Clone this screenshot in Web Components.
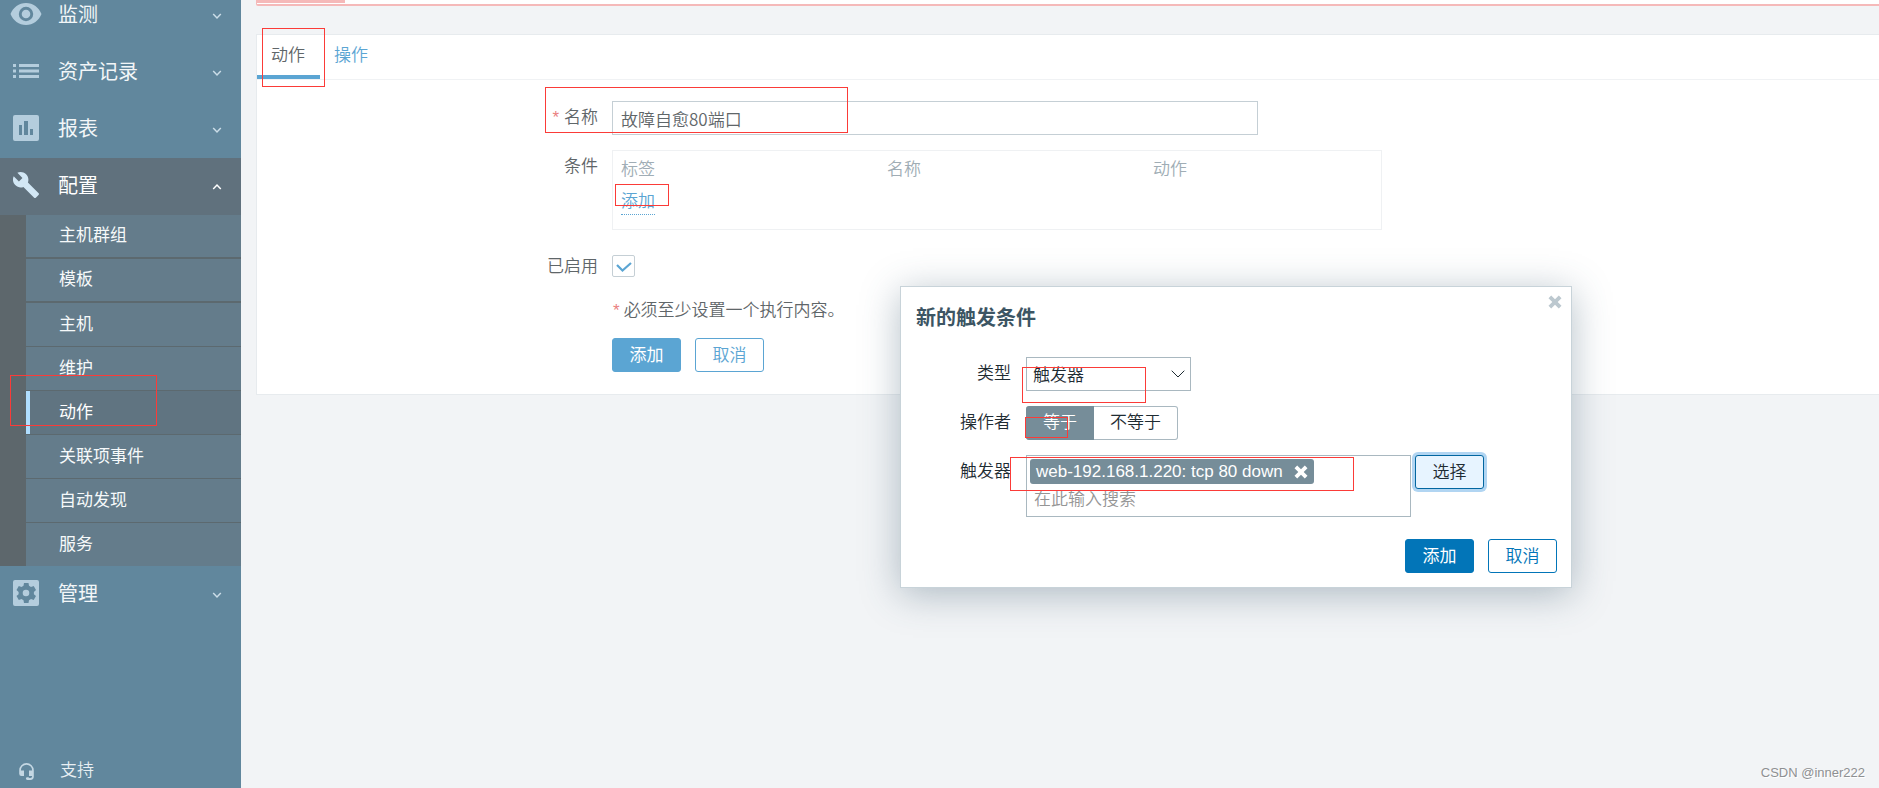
<!DOCTYPE html>
<html lang="zh-CN">
<head>
<meta charset="utf-8">
<title>动作配置</title>
<style>
html, body { margin: 0; height: 100%; }
body { font: 350 17px/24px "Liberation Sans", "Noto Sans CJK SC", sans-serif; color: #1f2c33; background: #f2f4f6; overflow: hidden; }
</style>
</head>
<body>
<zbx-app></zbx-app>
<script>
const define = (name, html, setup) => {
  const template = document.createElement('template');
  template.innerHTML = html;
  customElements.define(name, class extends HTMLElement {
    constructor() {
      super();
      this.attachShadow({ mode: 'open' }).append(template.content.cloneNode(true));
    }
    connectedCallback() { if (setup) setup(this, this.shadowRoot); }
  });
};

// Each icon is its viewBox and its artwork.
const icons = {
  eye: ['0 0 32 24', '<path fill-rule="evenodd" d="M16 1C9 1 3 5.500 .5 12 3 18.500 9 23 16 23s13-4.500 15.500-11C29 5.500 23 1 16 1zm0 18.200a7.200 7.200 0 1 1 0-14.400 7.200 7.200 0 0 1 0 14.400zm0-2.900a4.300 4.300 0 1 0 0-8.600 4.300 4.300 0 0 0 0 8.600z"/>'],
  list: ['0 0 26 16', '<path d="M0 1h3v3H0zM6 1h20v3H6zM0 6.500h3v3H0zM6 6.500h20v3H6zM0 12h3v3H0zM6 12h20v3H6z"/>'],
  chart: ['0 0 26 26', '<path fill-rule="evenodd" d="M2 0h22a2 2 0 0 1 2 2v22a2 2 0 0 1-2 2H2a2 2 0 0 1-2-2V2a2 2 0 0 1 2-2zm4 10v10h3V10zm5-4v14h4V6zm6 8v6h3v-6z"/>'],
  wrench: ['1 1 22 22', '<path d="M22.700 19l-9.100-9.100c.9-2.300.4-5-1.500-6.900-2-2-5-2.400-7.400-1.300L9 6 6 9 1.600 4.700C.4 7.100.9 10.100 2.900 12.100c1.900 1.900 4.600 2.400 6.900 1.500l9.100 9.100c.4.4 1 .4 1.400 0l2.300-2.300c.5-.4.5-1.100.1-1.400z"/>'],
  gear: ['0 0 26 26', '<path fill-rule="evenodd" d="M2 0h22a2 2 0 0 1 2 2v22a2 2 0 0 1-2 2H2a2 2 0 0 1-2-2V2a2 2 0 0 1 2-2zm9 3l-.5 2.700-2 1.200L5.800 6l-2.300 4 2.100 1.900v2.300L3.500 16l2.300 4 2.700-.9 2 1.200L11 23h4.500l.5-2.700 2-1.200 2.700.9 2.300-4-2.100-1.800v-2.300L23 10l-2.300-4-2.700.9-2-1.200-.5-2.700zm2 6.700a3.300 3.300 0 1 1 0 6.600 3.300 3.300 0 0 1 0-6.600z"/>'],
  headset: ['0 0 15 17', '<path d="M7.500 0A7.300 7.300 0 0 0 .2 7.300v3.400A2.300 2.300 0 0 0 2.500 13H5V7.600H1.900v-.3a5.600 5.600 0 0 1 11.200 0v.3H10V13h3.100v.3c0 1-.8 1.700-1.700 1.700h-1a1.500 1.500 0 0 0-1.300-.8H8.300a1.400 1.400 0 0 0 0 2.800h3.100a3.400 3.400 0 0 0 3.400-3.400V7.300A7.300 7.300 0 0 0 7.500 0z"/>'],
  cross: ['0 0 14 14', '<path d="M3.200.5L7 4.300 10.800.5 13.500 3.200 9.700 7l3.800 3.800-2.700 2.700L7 9.700l-3.800 3.800L.5 10.800 4.300 7 .5 3.200z"/>'],
  down: ['0 0 10 8', '<path d="M1.200 2L5 6l3.800-4" fill="none" stroke="currentColor" stroke-width="1.500"/>'],
  up: ['0 0 10 8', '<path d="M1.200 6L5 2l3.800 4" fill="none" stroke="currentColor" stroke-width="1.500"/>'],
  chevron: ['0 0 14 8', '<path d="M.7.7L7 7 13.300.7" fill="none" stroke="currentColor" stroke-width="1"/>']
};

define('zbx-icon', `<style>
  :host { display: block; }
  svg { display: block; width: 100%; height: 100%; fill: currentColor; }
</style><svg aria-hidden="true"></svg>`, (el, root) => {
  const icon = icons[el.getAttribute('name')];
  if (!icon) return;
  const svg = root.querySelector('svg');
  svg.setAttribute('viewBox', icon[0]);
  svg.innerHTML = icon[1];
});

define('zbx-nav-item', `<style>
  :host { display: block; color: #f2f6f8; --icon: #b4cddd; }
  a { display: flex; align-items: center; height: 57px; box-sizing: border-box; padding: 0 19px 3px 10px; color: inherit; text-decoration: none; font-size: 20px; line-height: 28px; font-weight: 400; }
  .icon { display: grid; place-items: center; width: 32px; margin-right: 16px; color: var(--icon); }
  .icon zbx-icon { width: 26px; height: 26px; }
  :host([icon=eye]) .icon zbx-icon { width: 32px; height: 24px; }
  :host([icon=list]) .icon zbx-icon { height: 16px; }
  .label { flex: 1; padding-top: 2px; }
  .arrow { width: 10px; height: 8px; margin-top: 4px; color: #cbdde8; }
  :host([open]) { --icon: #d2e7f5; color: #fff; }
  :host([open]) a { background: #60717d; }
  :host([open]) .arrow { color: #fff; }
</style><a href="#"><span class="icon"></span><span class="label"><slot></slot></span></a>
<slot name="menu"></slot>`, (el, root) => {
  const icon = document.createElement('zbx-icon');
  icon.setAttribute('name', el.getAttribute('icon'));
  const arrow = document.createElement('zbx-icon');
  arrow.setAttribute('name', el.hasAttribute('open') ? 'up' : 'down');
  arrow.className = 'arrow';
  root.querySelector('.icon').replaceChildren(icon);
  root.querySelector('a').append(arrow);
});

define('zbx-submenu', `<style>
  :host { display: block; padding-left: 26px; background: #5d676c; }
</style><slot></slot>`);

define('zbx-subitem', `<style>
  :host { display: block; height: 44px; box-sizing: border-box; border-bottom: 1px solid #5c696f; background: #647c8b; color: #f6f9fa; font-weight: 400; }
  :host([wide]) { border-bottom-width: 2px; }
  :host(:last-child) { height: 43px; border-bottom: 0; }
  :host([current]) { background: #607481; }
  a { display: flex; align-items: center; height: 100%; box-sizing: border-box; padding-left: 29px; border-left: 4px solid transparent; color: inherit; text-decoration: none; }
  :host([current]) a { border-left-color: #b0deff; color: #fff; }
</style><a href="#"><slot></slot></a>`);

define('zbx-sidebar', `<style>
  :host { display: flex; flex-direction: column; width: 241px; flex: none; background: #61879d; overflow: hidden; }
  nav { flex: 1; margin-top: -13px; }
  .support { display: flex; align-items: center; height: 34px; padding-left: 19px; color: #e8eff3; text-decoration: none; }
  .support zbx-icon { width: 15px; height: 17px; margin-right: 26px; color: #c4d7e3; }
</style>
<nav>
  <zbx-nav-item icon="eye">监测</zbx-nav-item>
  <zbx-nav-item icon="list">资产记录</zbx-nav-item>
  <zbx-nav-item icon="chart">报表</zbx-nav-item>
  <zbx-nav-item icon="wrench" open>配置
    <zbx-submenu slot="menu">
      <zbx-subitem wide>主机群组</zbx-subitem>
      <zbx-subitem wide>模板</zbx-subitem>
      <zbx-subitem>主机</zbx-subitem>
      <zbx-subitem>维护</zbx-subitem>
      <zbx-subitem current>动作</zbx-subitem>
      <zbx-subitem>关联项事件</zbx-subitem>
      <zbx-subitem>自动发现</zbx-subitem>
      <zbx-subitem>服务</zbx-subitem>
    </zbx-submenu>
  </zbx-nav-item>
  <zbx-nav-item icon="gear">管理</zbx-nav-item>
</nav>
<a class="support" href="#"><zbx-icon name="headset"></zbx-icon>支持</a>`);

define('zbx-button', `<style>
  :host { display: block; --tone: #5ba5d3; }
  button { display: block; min-width: 69px; height: 34px; box-sizing: border-box; padding: 2px 16px 0; border: 1px solid var(--tone); border-radius: 3px; background: #fff; color: var(--tone); font: inherit; cursor: pointer; }
  :host([primary]) button { background: var(--tone); color: #fff; font-weight: 400; }
  :host([strong]) { --tone: #0275b8; }
  :host([focused]) button { background: #e7f4ff; border-color: #0266a0; color: #1f2c33; box-shadow: 0 0 0 3px #b1d5f2; }
</style><button type="button"><slot></slot></button>`);

define('zbx-tabs', `<style>
  :host { display: flex; height: 44px; border-bottom: 1px solid #f0f2f4; }
  a { display: flex; align-items: center; box-sizing: border-box; padding: 2px 14px 0; color: #5ba5d3; text-decoration: none; border-bottom: 4px solid transparent; }
  a.on { color: #5f6669; padding-right: 15px; border-bottom-color: #5ba5d3; }
</style><a class="on" href="#">动作</a><a href="#">操作</a>`);

define('zbx-action-form', `<style>
  :host { display: block; color: #5f6669; }
  form { display: grid; grid-template-columns: 341px minmax(0, 770px); column-gap: 14px; padding: 21px 0 22px; }
  .label { text-align: right; padding-top: 5px; }
  i { font-style: normal; color: #ea7f7f; margin-right: 5px; }
  .name { width: 646px; max-width: 100%; height: 34px; box-sizing: border-box; padding: 0 8px; border: 1px solid #c5cfd5; border-radius: 0; background: #fff; font: inherit; font-family: "Noto Sans CJK SC", sans-serif; color: #5f6669; outline: 0; display: block; }
  .box { margin-top: 15px; height: 80px; box-sizing: border-box; border: 1px solid #eff1f3; padding: 3px 0 0 8px; }
  .cond { margin-top: 15px; }
  table { width: 100%; border-collapse: collapse; table-layout: fixed; }
  th, td { padding: 4px 0; height: 24px; text-align: left; font-weight: inherit; }
  th { color: #a0adb5; width: 266px; }
  th:last-child { width: auto; }
  td a { display: inline-block; color: #5ba5d3; text-decoration: none; border-bottom: 1px dotted #5ba5d3; }
  .en { margin-top: 25px; padding-top: 0; }
  input[type=checkbox] { appearance: none; display: block; width: 23px; height: 22px; margin: 0; border: 1px solid #c5cfd5; border-radius: 2px; background: #fff; }
  .check { position: relative; width: 23px; }
  .check svg { position: absolute; left: 4px; top: 6px; pointer-events: none; }
  p { grid-column: 2; margin: 20px 0 15px; }
  p i { margin: 0 4px 0 1px; }
  .actions { grid-column: 2; display: flex; gap: 14px; }
</style>
<form>
  <label class="label" for="name"><i>*</i>名称</label>
  <input class="name" id="name" type="text" value="故障自愈80端口">
  <span class="label cond">条件</span>
  <div class="box"><table>
    <thead><tr><th>标签</th><th>名称</th><th>动作</th></tr></thead>
    <tbody><tr><td colspan="3"><a href="#">添加</a></td></tr></tbody>
  </table></div>
  <label class="label en" for="enabled">已启用</label>
  <div class="check en"><input id="enabled" type="checkbox" checked><svg width="16" height="12" viewBox="0 0 16 12"><path d="M1 4l5.500 5.500L15 2" fill="none" stroke="#5ba5d3" stroke-width="2.200"/></svg></div>
  <p><i>*</i>必须至少设置一个执行内容。</p>
  <div class="actions"><zbx-button primary>添加</zbx-button><zbx-button>取消</zbx-button></div>
</form>`);

define('zbx-condition-dialog', `<style>
  :host { display: block; width: 672px; box-sizing: border-box; border: 1px solid #c8d3d9; background: #fff; padding: 17px 14px 14px 15px; box-shadow: 0 6px 36px rgba(60, 90, 110, .38); color: #1f2c33; }
  h4 { margin: 0; font-size: 20px; line-height: 28px; font-weight: 700; color: #3c5563; }
  .close { position: absolute; top: 8px; right: 9px; width: 14px; height: 14px; padding: 0; border: 0; background: none; color: #bcc8cf; }
  form { display: grid; grid-template-columns: 95px 1fr; column-gap: 15px; row-gap: 15px; margin-top: 25px; }
  .label { text-align: right; padding-top: 5px; }
  .select { position: relative; width: 165px; }
  select { appearance: none; display: block; width: 100%; height: 34px; box-sizing: border-box; padding: 3px 6px 0; border: 1px solid #a9b8c0; border-radius: 0; background: #fff; font: inherit; color: inherit; }
  .select zbx-icon { position: absolute; right: 6px; top: 13px; width: 14px; height: 8px; pointer-events: none; }
  .seg { display: flex; border: 0; margin: 0; padding: 0; }
  .seg input { position: absolute; opacity: 0; margin: 0; }
  .seg label { height: 34px; box-sizing: border-box; padding: 4px 16px; border: 1px solid #a9b8c0; border-radius: 0 3px 3px 0; border-left: 0; }
  .seg input:checked + label { padding-left: 17px; background: #768d99; border-color: #768d99; color: #fff; border-radius: 3px 0 0 3px; }
  .pick { display: flex; align-items: flex-start; gap: 4px; }
  .multi { width: 385px; height: 62px; box-sizing: border-box; border: 1px solid #a9b8c0; padding: 3px; }
  .tag { display: flex; width: max-content; align-items: center; height: 25px; padding: 0 6px; border-radius: 3px; background: #768d99; color: #fff; font-weight: 400; }
  .tag button { width: 14px; height: 14px; margin-left: 11px; padding: 0; border: 0; background: none; color: #fff; }
  .multi input { display: block; width: 100%; height: 26px; box-sizing: border-box; border: 0; padding: 0 4px; margin-top: 3px; background: none; font: inherit; outline: 0; }
  .multi input::placeholder { color: #959595; opacity: 1; }
  .actions { display: flex; justify-content: flex-end; gap: 14px; margin-top: 22px; }
</style>
<h4>新的触发条件</h4>
<button class="close" type="button" aria-label="关闭"><zbx-icon name="cross"></zbx-icon></button>
<form>
  <label class="label" for="type">类型</label>
  <div class="select"><select id="type"><option>触发器</option></select><zbx-icon name="chevron"></zbx-icon></div>
  <span class="label" id="op">操作者</span>
  <div class="seg" role="radiogroup" aria-labelledby="op"><input type="radio" name="op" id="eq" checked><label for="eq">等于</label><input type="radio" name="op" id="ne"><label for="ne">不等于</label></div>
  <label class="label" for="trigger">触发器</label>
  <div class="pick"><div class="multi"><span class="tag">web-192.168.1.220: tcp 80 down<button type="button" aria-label="移除"><zbx-icon name="cross"></zbx-icon></button></span><input id="trigger" type="text" placeholder="在此输入搜索"></div><zbx-button focused>选择</zbx-button></div>
</form>
<div class="actions"><zbx-button strong primary>添加</zbx-button><zbx-button strong>取消</zbx-button></div>`);

define('zbx-mark', `<style>
  :host { position: absolute; box-sizing: border-box; border: 1px solid #fb3b38; pointer-events: none; }
</style>`, el => {
  const [x, y, w, h] = el.getAttribute('box').split(' ');
  Object.assign(el.style, { left: x + 'px', top: y + 'px', width: w + 'px', height: h + 'px' });
});

define('zbx-app', `<style>
  :host { display: flex; position: relative; min-height: 100vh; }
  main { flex: 1; min-width: 0; padding-left: 15px; }
  .message { height: 6px; box-sizing: border-box; border: solid #f5b9b9; border-width: 0 0 2px 1px; border-radius: 0 0 0 2px; background: #fff; }
  .message div { width: 88px; height: 3px; background: #f5b9b9; }
  .card { margin-top: 28px; background: #fff; border: 1px solid #e7ebee; border-right: 0; }
  zbx-condition-dialog { position: absolute; left: 900px; top: 286px; }
  .credit { position: absolute; right: 14px; bottom: 5px; font-size: 13px; line-height: 20px; font-weight: 400; color: #8e9092; text-shadow: 1px 1px 0 #fff; }
</style>
<zbx-sidebar></zbx-sidebar>
<main>
  <div class="message"><div></div></div>
  <section class="card"><zbx-tabs></zbx-tabs><zbx-action-form></zbx-action-form></section>
</main>
<zbx-condition-dialog role="dialog"></zbx-condition-dialog>
<zbx-mark box="262 28 63 59"></zbx-mark>
<zbx-mark box="10 375 147 51"></zbx-mark>
<zbx-mark box="545 87 303 46"></zbx-mark>
<zbx-mark box="615 184 54 22"></zbx-mark>
<zbx-mark box="1022 367 124 36"></zbx-mark>
<zbx-mark box="1025 417 43 21"></zbx-mark>
<zbx-mark box="1010 457 344 34"></zbx-mark>
<span class="credit">CSDN @inner222</span>`);
</script>
</body>
</html>
